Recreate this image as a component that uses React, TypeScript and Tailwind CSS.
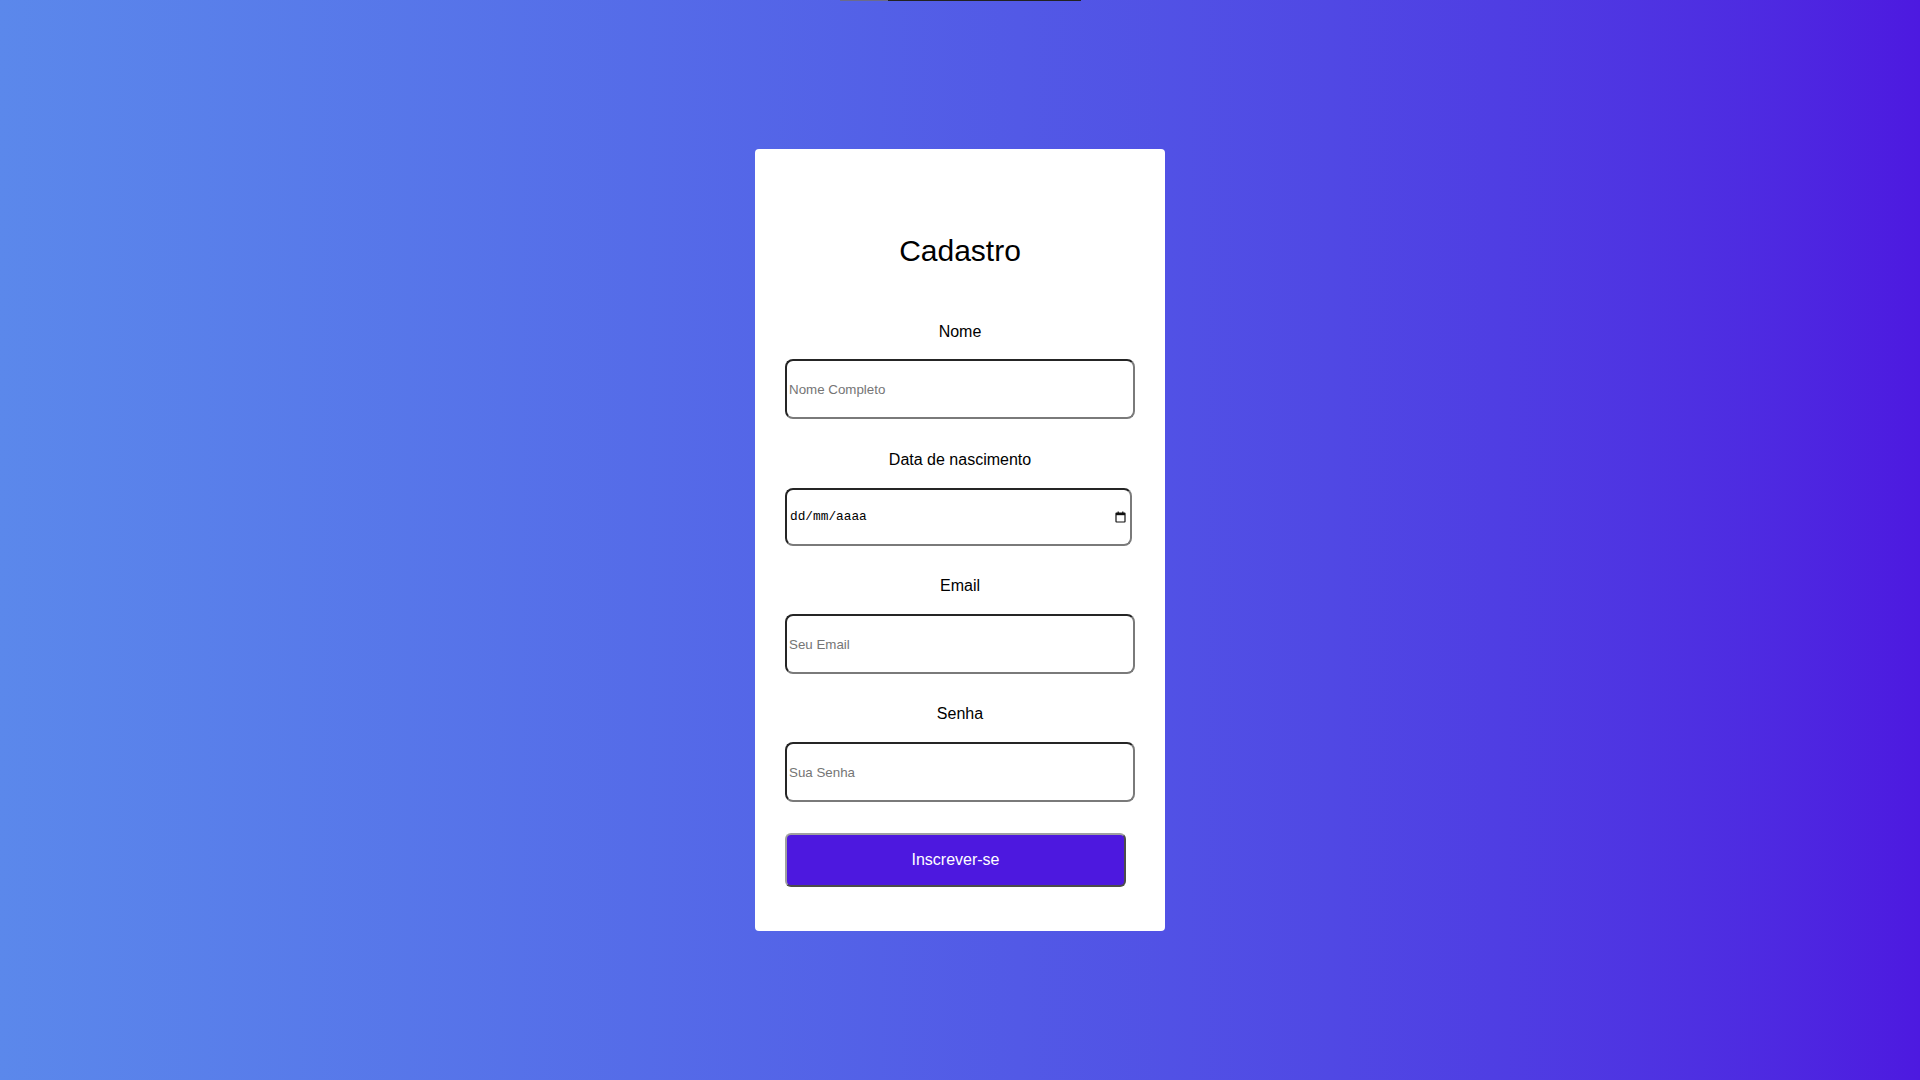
import React from "react";

const inputClass =
  "block w-full h-[60px] px-[2px] rounded-[8px] border-2 [border-style:inset] border-[#7a7a7a] bg-white text-[13.33px] text-black placeholder:text-[#757575] outline-none";

const Label = ({ children, className = "" }: { children: React.ReactNode; className?: string }) => (
  <label className={`block text-center text-[16px] leading-[18px] text-black ${className}`}>{children}</label>
);

const CalendarIcon = () => (
  <svg width="11" height="12" viewBox="0 0 11 12" fill="none">
    <rect x="1" y="2" width="9" height="9" rx="0.5" stroke="#111" strokeWidth="1.2" />
    <rect x="1" y="2" width="9" height="2.2" fill="#111" />
    <rect x="2.6" y="0.5" width="1.2" height="2" fill="#111" />
    <rect x="7.2" y="0.5" width="1.2" height="2" fill="#111" />
  </svg>
);

export default function App() {
  return (
    <div
      className="relative min-h-screen w-full flex items-center justify-center bg-linear-to-r from-[#5b88eb] to-[#4d19e0]"
      style={{ fontFamily: '"Liberation Sans", Arial, sans-serif' }}
    >
      {/* pedaço de elemento que aparece no topo */}
      <div className="absolute top-0 left-[840px] flex h-px w-[241px]">
        <div className="w-[48px] bg-[#6b6b8a]" />
        <div className="flex-1 bg-[#222]" />
      </div>

      <form
        className="w-[410px] h-[782px] bg-white rounded-[4px] px-[30px] pt-[85px]"
        onSubmit={(e) => e.preventDefault()}
      >
        <h1 className="text-center text-[30px] leading-[33px] text-black">Cadastro</h1>

        <Label className="mt-[56px]">Nome</Label>
        <input type="text" placeholder="Nome Completo" className={`${inputClass} mt-[18px]`} />

        <Label className="mt-[32px]">Data de nascimento</Label>
        <div className="mt-[19px] flex items-center justify-between w-[347px] h-[58px] pl-[3px] pr-[4px] rounded-[8px] border-2 [border-style:inset] border-[#7a7a7a] bg-white">
          <span
            className="text-[12.8px] text-black"
            style={{ fontFamily: '"Liberation Mono", "DejaVu Sans Mono", monospace' }}
          >
            dd/mm/aaaa
          </span>
          <CalendarIcon />
        </div>

        <Label className="mt-[31px]">Email</Label>
        <input type="email" placeholder="Seu Email" className={`${inputClass} mt-[19px]`} />

        <Label className="mt-[31px]">Senha</Label>
        <input type="password" placeholder="Sua Senha" className={`${inputClass} mt-[19px]`} />

        <button
          type="submit"
          className="mt-[31px] block w-[341px] h-[54px] rounded-[6px] border-2 [border-style:outset] border-[#a0a0a0] bg-[#4d18df] text-white text-[16px]"
        >
          Inscrever-se
        </button>
      </form>
    </div>
  );
}
